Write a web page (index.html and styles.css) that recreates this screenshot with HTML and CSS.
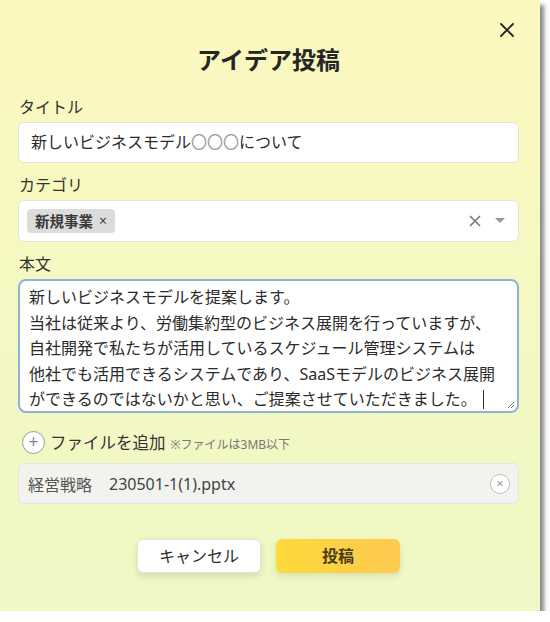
FILE: index.html
```html
<!DOCTYPE html>
<html lang="ja">
  <head>
    <meta charset="utf-8">
    <meta name="viewport" content="width=device-width, initial-scale=1.0">
    <title>アイデア投稿</title>
    <link rel="stylesheet" href="styles.css">
  </head>
  <body>
    <div class="modal">
      <div class="topBar">
        <a class="close">
          <svg width="14" height="14" viewBox="0 0 14 14"><path d="M1 1 L13 13 M13 1 L1 13" stroke="#222" stroke-width="1.8" stroke-linecap="round"/></svg>
        </a>
      </div>
      <h1 class="title">アイデア投稿</h1>

      <div class="field">
        <label>タイトル</label>
        <div class="box input">新しいビジネスモデル<span class="mark">〇〇〇</span>について</div>
      </div>

      <div class="field">
        <label>カテゴリ</label>
        <div class="box select">
          <span class="chip">新規事業 <span class="chipX">×</span></span>
          <span class="selectIcons">
            <svg width="12" height="12" viewBox="0 0 12 12"><path d="M1 1 L11 11 M11 1 L1 11" stroke="#777" stroke-width="1.6"/></svg>
            <svg width="12" height="8" viewBox="0 0 12 8"><path d="M1 1 L11 1 L6 6 Z" fill="#999"/></svg>
          </span>
        </div>
      </div>

      <div class="field">
        <label>本文</label>
        <div class="box textarea">新しいビジネスモデルを提案します。
当社は従来より、労働集約型のビジネス展開を行っていますが、
自社開発で私たちが活用しているスケジュール管理システムは
他社でも活用できるシステムであり、SaaSモデルのビジネス展開
ができるのではないかと思い、ご提案させていただきました。<span class="caret"></span><svg class="grip" width="8" height="8" viewBox="0 0 8 8"><path d="M7 1 L1 7 M7 4 L4 7" stroke="#777" stroke-width="1"/></svg></div>
      </div>

      <div class="addFile">
        <span class="plus">+</span>
        <span class="addText">ファイルを追加</span>
        <span class="note">※ファイルは3MB以下</span>
      </div>

      <div class="fileRow">
        <span class="fileName">経営戦略</span>
        <span class="fileExt">230501-1(1).pptx</span>
        <span class="fileRemove">×</span>
      </div>

      <div class="buttons">
        <a class="button cancel">キャンセル</a>
        <a class="button post">投稿</a>
      </div>
    </div>
  </body>
</html>
```

FILE: styles.css
```css
:root {
  --text: #2b2b2b;
  --line: #e4e4d4;
  --blue: #8fb3d8;
}

body {
  margin: 0;
  background: #ffffff;
  font-family: "Noto Sans", "Noto Sans CJK JP", sans-serif;
  color: var(--text);
}
.modal {
  width: 540px;
  height: 611px;
  box-sizing: border-box;
  padding: 23px 21px 0 18px;
  background: linear-gradient(180deg, #fcf8bf 0%, #f5f8c2 50%, #eff8c5 100%);
  box-shadow: 4px 5px 4px rgba(60,60,60,0.6);
  display: flex;
  flex-direction: column;
}
.topBar {
  display: flex;
  justify-content: flex-end;
  height: 14px;
  padding-right: 5px;
}
.close {
  display: block;
  width: 14px;
  height: 14px;
}
.close svg {
  display: block;
}
.title {
  margin: 8px 0 21px 0;
  font-size: 24px;
  line-height: 30px;
  font-weight: 700;
  text-align: center;
  color: #262626;
}
.field {
  margin-bottom: 11px;
}
label {
  display: block;
  font-size: 16px;
  line-height: 22px;
  margin-bottom: 4px;
  padding-left: 1px;
  color: #333;
}
.box {
  box-sizing: border-box;
  background: #ffffff;
  border: 1px solid var(--line);
  border-radius: 6px;
}
.input {
  height: 41px;
  padding: 0 12px;
  font-size: 16px;
  line-height: 39px;
  color: #2b2b2b;
}
.mark {
  color: #9a9a9a;
}
.select {
  height: 42px;
  padding: 0 12px 0 8px;
  display: flex;
  align-items: center;
  justify-content: space-between;
}
.chip {
  background: #dcdcdc;
  border-radius: 4px;
  padding: 0 8px;
  height: 24px;
  line-height: 24px;
  font-size: 14.5px;
  font-weight: 700;
  color: #3a3a3a;
  display: flex;
  align-items: center;
  gap: 6px;
}
.chipX {
  font-size: 14px;
  font-weight: 400;
  color: #444;
}
.selectIcons {
  display: flex;
  align-items: center;
  gap: 13px;
}
.textarea {
  position: relative;
  height: 134px;
  padding: 4px 9px;
  border: 2px solid var(--blue);
  border-radius: 8px;
  white-space: pre;
  font-size: 16px;
  line-height: 25.5px;
  color: #2b2b2b;
  overflow: hidden;
}
.caret {
  display: inline-block;
  width: 1px;
  height: 19px;
  margin-left: 6px;
  background: #333;
  vertical-align: -4px;
}
.grip {
  position: absolute;
  right: 2px;
  bottom: 2px;
}
.addFile {
  display: flex;
  align-items: center;
  margin-top: 6px;
  padding-left: 4px;
  height: 24px;
}
.plus {
  box-sizing: border-box;
  width: 23px;
  height: 23px;
  border: 1.5px solid #9a9a9a;
  border-radius: 50%;
  background: #ffffff;
  color: #888;
  font-size: 18px;
  line-height: 19px;
  text-align: center;
  margin-right: 5px;
}
.addText {
  font-size: 16.5px;
  color: #333;
}
.note {
  font-size: 12px;
  color: #777;
  margin-left: 5px;
  margin-top: 3px;
}
.fileRow {
  box-sizing: border-box;
  margin-top: 9px;
  height: 41px;
  padding: 0 8px 0 9px;
  background: #f2f2ef;
  border: 1px solid #e5e5de;
  border-radius: 6px;
  display: flex;
  align-items: center;
  font-size: 16px;
  color: #555;
}
.fileName {
  margin-right: 17px;
}
.fileExt {
  flex: 1;
  color: #444;
}
.fileRemove {
  box-sizing: border-box;
  width: 20px;
  height: 20px;
  border: 1.5px solid #bdbdbd;
  border-radius: 50%;
  background: #ffffff;
  color: #999;
  font-size: 13px;
  line-height: 16px;
  text-align: center;
}
.buttons {
  display: flex;
  justify-content: center;
  gap: 15px;
  margin-top: 35px;
}
.button {
  display: block;
  box-sizing: border-box;
  width: 124px;
  height: 34px;
  line-height: 34px;
  border-radius: 6px;
  text-align: center;
  font-size: 16px;
}
.cancel {
  background: #ffffff;
  border: 1px solid #e2e2dc;
  line-height: 32px;
  color: #2b2b2b;
  box-shadow: 0 3px 7px rgba(0,0,0,0.12);
}
.post {
  background: linear-gradient(90deg, #fdd93a 0%, #fec951 100%);
  color: #4a3c14;
  font-weight: 700;
  box-shadow: 0 3px 7px rgba(0,0,0,0.1);
}
```
